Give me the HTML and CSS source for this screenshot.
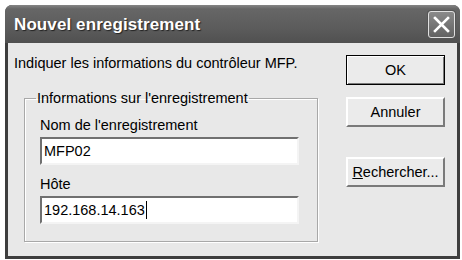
FILE: index.html
```html
<!DOCTYPE html>
<html lang="fr">
<head>
    <meta charset="UTF-8">
    <title>Nouvel enregistrement</title>
    <link rel="stylesheet" href="styles.css">
</head>
<body>
    <div class="window">
        <div class="titlebar">
            <span class="title">Nouvel enregistrement</span>
            <span class="close">
                <svg width="17" height="17" viewBox="0 0 17 17">
                    <path d="M2 2 L15 15 M15 2 L2 15" stroke="#fff" stroke-width="2.6" stroke-linecap="square"/>
                </svg>
            </span>
        </div>
        <div class="client">
            <div class="main">
                <p class="intro">Indiquer les informations du contrôleur MFP.</p>
                <fieldset class="group">
                    <legend>Informations sur l'enregistrement</legend>
                    <label class="field-label">Nom de l'enregistrement</label>
                    <div class="textbox">MFP02</div>
                    <label class="field-label">Hôte</label>
                    <div class="textbox">192.168.14.163<span class="caret"></span></div>
                </fieldset>
            </div>
            <div class="buttons">
                <button class="btn default">OK</button>
                <button class="btn">Annuler</button>
                <button class="btn browse"><u>R</u>echercher...</button>
            </div>
        </div>
    </div>
</body>
</html>
```

FILE: styles.css
```css
body { margin: 0; padding: 5px 2px 1px 5px; background: #fff; font-family: "Liberation Sans", Arial, sans-serif; font-size: 14.5px; color: #000; }
.window { height: 254px; display: flex; flex-direction: column; background: #3e3e3e; border-radius: 7px 7px 0 0; overflow: hidden; }
.titlebar { height: 38px; display: flex; align-items: center; justify-content: space-between; padding: 0 5px 0 9px; background: linear-gradient(#858585 0, #666 4px, #5c5c5c 60%, #505050 100%); }
.title { color: #fff; font-weight: bold; font-size: 17px; letter-spacing: 0.1px; text-shadow: 1px 1px 1px #222; margin-top: 1px; }
.close { width: 25px; height: 25px; display: flex; align-items: center; justify-content: center; border: 1px solid #e0e0e0; border-radius: 3px; background: linear-gradient(#8a8a8a, #626262); box-shadow: 0 0 0 1px #555; }
.client { flex: 1; display: flex; margin: 0 3px 3px 3px; background: #e8e8e8; padding: 12px 12px 0 6px; }
.main { flex: 1; }
.intro { margin: 0; line-height: 16px; }
.group { margin: 19px 0 0 10px; width: 294px; box-sizing: border-box; padding: 0 18px 17px 15px; border: 1px solid #a8a8a8; box-shadow: inset 1px 1px 0 #fff, 1px 1px 0 #fff; }
.group legend { padding: 0 1px; margin-left: -4px; line-height: 16px; }
.field-label { display: block; line-height: 16px; margin: 11px 0 4px 0; }
.textbox { height: 28px; box-sizing: border-box; background: #fff; border-top: 2px solid #707070; border-left: 2px solid #707070; border-right: 2px solid #f4f4f4; border-bottom: 2px solid #f4f4f4; padding: 4px 2px; line-height: 18px; display: flex; align-items: center; }
.caret { display: inline-block; width: 1px; height: 18px; background: #000; margin-left: 1px; }
.buttons { width: 99px; display: flex; flex-direction: column; gap: 12px; }
.btn { height: 30px; font-family: inherit; font-size: 14.5px; color: #000; background: #ebebeb; border: 2px solid; border-color: #fff #7a7a7a #7a7a7a #fff; padding: 0; cursor: pointer; }
.btn.default { border: 1px solid #000; box-shadow: inset 1px 1px 0 #fff, inset -1px -1px 0 #7a7a7a; }
.btn.browse { margin-top: 18px; }
.btn u { text-decoration: underline; }
```
